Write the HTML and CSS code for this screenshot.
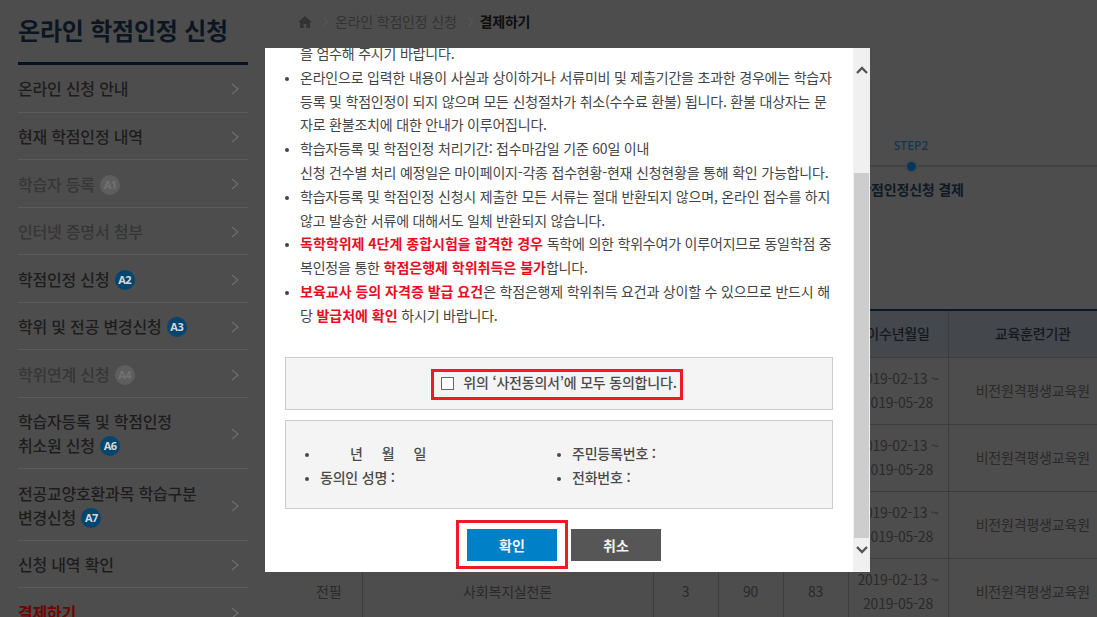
FILE: index.html
```html
<!DOCTYPE html>
<html lang="ko">
<head>
<meta charset="utf-8">
<title>온라인 학점인정 신청 - 결제하기</title>
<link rel="stylesheet" href="styles.css">
</head>
<body>
<div class="page">
  <aside class="sidebar">
    <h1 class="side-title">온라인 학점인정 신청</h1>
    <nav class="side-nav">
      <a class="side-item"><span>온라인 신청 안내</span><svg class="chev" viewBox="0 0 8 12"><path d="M1 1l6 5-6 5"/></svg></a>
      <a class="side-item"><span>현재 학점인정 내역</span><svg class="chev" viewBox="0 0 8 12"><path d="M1 1l6 5-6 5"/></svg></a>
      <a class="side-item off"><span>학습자 등록 <i class="badge">A1</i></span><svg class="chev" viewBox="0 0 8 12"><path d="M1 1l6 5-6 5"/></svg></a>
      <a class="side-item off"><span>인터넷 증명서 첨부</span><svg class="chev" viewBox="0 0 8 12"><path d="M1 1l6 5-6 5"/></svg></a>
      <a class="side-item"><span>학점인정 신청 <i class="badge">A2</i></span><svg class="chev" viewBox="0 0 8 12"><path d="M1 1l6 5-6 5"/></svg></a>
      <a class="side-item"><span>학위 및 전공 변경신청 <i class="badge">A3</i></span><svg class="chev" viewBox="0 0 8 12"><path d="M1 1l6 5-6 5"/></svg></a>
      <a class="side-item off"><span>학위연계 신청 <i class="badge">A4</i></span><svg class="chev" viewBox="0 0 8 12"><path d="M1 1l6 5-6 5"/></svg></a>
      <a class="side-item"><span>학습자등록 및 학점인정<br>취소원 신청 <i class="badge">A6</i></span><svg class="chev" viewBox="0 0 8 12"><path d="M1 1l6 5-6 5"/></svg></a>
      <a class="side-item"><span>전공교양호환과목 학습구분<br>변경신청 <i class="badge">A7</i></span><svg class="chev" viewBox="0 0 8 12"><path d="M1 1l6 5-6 5"/></svg></a>
      <a class="side-item"><span>신청 내역 확인</span><svg class="chev" viewBox="0 0 8 12"><path d="M1 1l6 5-6 5"/></svg></a>
      <a class="side-item now"><span>결제하기</span><svg class="chev" viewBox="0 0 8 12"><path d="M1 1l6 5-6 5"/></svg></a>
    </nav>
  </aside>

  <main class="main">
    <div class="crumbs">
      <svg class="home" viewBox="0 0 14 12"><path d="M7 0L0 6.2h2V12h3.6V8h2.8v4H12V6.2h2z"/></svg>
      <svg class="crumb-sep" viewBox="0 0 5 10"><path d="M.5.5L4.5 5 .5 9.5"/></svg>
      <span>온라인 학점인정 신청</span>
      <svg class="crumb-sep" viewBox="0 0 5 10"><path d="M.5.5L4.5 5 .5 9.5"/></svg>
      <strong>결제하기</strong>
    </div>

    <div class="steps">
      <div class="step">
        <div class="step-no"></div>
        <div class="step-track"></div>
      </div>
      <div class="step">
        <div class="step-no">STEP2</div>
        <div class="step-track"><i class="step-dot"></i></div>
        <div class="step-name">학점인정신청 결제</div>
      </div>
    </div>

    <table class="grid">
      <colgroup>
        <col class="c1"><col class="c2"><col class="c3"><col class="c3"><col class="c3"><col class="c4"><col class="c5">
      </colgroup>
      <thead>
        <tr><th>구분</th><th>과목명</th><th>학점</th><th>출석</th><th>성적</th><th>이수년월일</th><th>교육훈련기관</th></tr>
      </thead>
      <tbody>
        <tr><td>전필</td><td>사회복지개론</td><td>3</td><td>90</td><td>83</td><td>2019-02-13 ~<br>2019-05-28</td><td>비전원격평생교육원</td></tr>
        <tr><td>전필</td><td>사회복지법제론</td><td>3</td><td>90</td><td>83</td><td>2019-02-13 ~<br>2019-05-28</td><td>비전원격평생교육원</td></tr>
        <tr><td>전필</td><td>사회복지행정론</td><td>3</td><td>90</td><td>83</td><td>2019-02-13 ~<br>2019-05-28</td><td>비전원격평생교육원</td></tr>
        <tr><td>전필</td><td>사회복지실천론</td><td>3</td><td>90</td><td>83</td><td>2019-02-13 ~<br>2019-05-28</td><td>비전원격평생교육원</td></tr>
      </tbody>
    </table>
  </main>
</div>

<section class="modal">
  <div class="modal-body">
    <div class="modal-scroll">
      <p class="lead">을 엄수해 주시기 바랍니다.</p>
      <ul class="notes">
        <li>온라인으로 입력한 내용이 사실과 상이하거나 서류미비 및 제출기간을 초과한 경우에는 학습자등록 및 학점인정이 되지 않으며 모든 신청절차가 취소(수수료 환불) 됩니다. 환불 대상자는 문자로 환불조치에 대한 안내가 이루어집니다.</li>
        <li>학습자등록 및 학점인정 처리기간: 접수마감일 기준 60일 이내<br>신청 건수별 처리 예정일은 마이페이지-각종 접수현황-현재 신청현황을 통해 확인 가능합니다.</li>
        <li>학습자등록 및 학점인정 신청시 제출한 모든 서류는 절대 반환되지 않으며, 온라인 접수를 하지 않고 발송한 서류에 대해서도 일체 반환되지 않습니다.</li>
        <li><b>독학학위제 4단계 종합시험을 합격한 경우</b> 독학에 의한 학위수여가 이루어지므로 동일학점 중복인정을 통한 <b>학점은행제 학위취득은 불가</b>합니다.</li>
        <li><b>보육교사 등의 자격증 발급 요건</b>은 학점은행제 학위취득 요건과 상이할 수 있으므로 반드시 해당 <b>발급처에 확인</b> 하시기 바랍니다.</li>
      </ul>
      <div class="agree-box">
        <label class="agree"><i class="check"></i><span>위의 ‘사전동의서’에 모두 동의합니다.</span></label>
      </div>
      <ul class="sign-box">
        <li><span class="ymd"><span>년</span><span>월</span><span>일</span></span></li>
        <li>주민등록번호 :</li>
        <li>동의인 성명 :</li>
        <li>전화번호 :</li>
      </ul>
      <div class="actions">
        <button class="btn ok" type="button">확인</button>
        <button class="btn cancel" type="button">취소</button>
      </div>
    </div>
    <div class="mark mark-agree"></div>
    <div class="mark mark-ok"></div>
  </div>
  <div class="scrollbar">
    <svg class="arrow" viewBox="0 0 12 10"><path d="M1 8l5-5 5 5"/></svg>
    <div class="sb-gap-top"></div>
    <div class="sb-thumb"></div>
    <svg class="arrow" viewBox="0 0 12 10"><path d="M1 2l5 5 5-5"/></svg>
  </div>
</section>
</body>
</html>
```

FILE: styles.css
```css
* { box-sizing: border-box; }
html, body { height: 100%; margin: 0; }
body {
  overflow: hidden;
  background: #4d4d4d;
  color: #2a2a2a;
  font-family: "Noto Sans CJK KR", "Noto Sans", sans-serif;
  font-size: 14px;
  line-height: 23.8px;
  letter-spacing: -.2px;
}
.page { display: flex; height: 617px; overflow: hidden; }

/* sidebar */
.sidebar { flex: none; width: 230px; margin-left: 18px; }
.side-title {
  margin: 0;
  height: 65px;
  padding-top: 12px;
  border-bottom: 3px solid #06121f;
  color: #0b1622;
  font-size: 24px;
  line-height: 36px;
  font-weight: 700;
  white-space: nowrap;
}
.side-item {
  display: flex;
  align-items: center;
  justify-content: space-between;
  padding: 12.4px 9px 10.4px 0;
  border-bottom: 1px solid #5c5c5c;
  color: #1d1d1d;
  font-size: 16px;
  font-weight: 500;
}
.side-item.off { color: #363636; }
.side-item.now { color: #6d0505; font-weight: 700; }
.badge {
  display: inline-block;
  width: 20px;
  height: 20px;
  margin: 2px 0 0 1px;
  border-radius: 50%;
  background: #02456f;
  color: #d8d8d8;
  font: 700 11px/20px "Noto Sans", sans-serif;
  letter-spacing: -.5px;
  text-align: center;
  vertical-align: top;
}
.off .badge { background: #5e5e5e; color: #727272; }
.chev { flex: none; width: 8px; height: 12px; fill: none; stroke: #6e6e6e; stroke-width: 1.2; }

/* main */
.main { flex: none; width: 821px; margin-left: 48px; }
.crumbs {
  display: flex;
  align-items: center;
  height: 44px;
  padding-left: 2px;
  color: #333;
}
.crumbs strong { color: #0e0e0e; font-weight: 700; }
.home { width: 14px; height: 12px; fill: #333; }
.crumb-sep { width: 5px; height: 10px; margin: 0 7px 0 11px; fill: none; stroke: #5d5d5d; }
.steps { display: grid; grid-template-columns: 410px 410px; padding-top: 92px; height: 265px; text-align: center; }
.step-no { height: 20px; color: #103850; font: 500 12px/20px "Noto Sans", sans-serif; letter-spacing: .1px; }
.step-track {
  display: flex;
  align-items: center;
  justify-content: center;
  height: 20px;
  background: linear-gradient(#424242, #424242) center / 100% 2px no-repeat;
}
.step-dot { width: 9px; height: 9px; border-radius: 50%; background: #02385c; box-shadow: 0 0 0 2px #494949; }
.step-name { color: #0f1a26; font-weight: 700; line-height: 26px; }

.grid { width: 821px; table-layout: fixed; border-collapse: collapse; border-top: 2px solid #0a1827; }
.c1 { width: 66px; }
.c2 { width: 291px; }
.c3 { width: 65px; }
.c4 { width: 100px; }
.c5 { width: 169px; }
.grid th {
  height: 47px;
  padding: 0;
  background: #44474c;
  border-bottom: 1px solid #3d3d3d;
  border-left: 1px solid #3d3d3d;
  color: #15191f;
  font-weight: 500;
}
.grid td {
  height: 67px;
  padding: 0;
  border-bottom: 1px solid #3d3d3d;
  border-left: 1px solid #3d3d3d;
  text-align: center;
  color: #2a2a2a;
}
.grid th:first-child, .grid td:first-child { border-left: 0; }

/* modal */
.modal {
  position: absolute;
  left: 265px;
  top: 48px;
  display: flex;
  width: 605px;
  height: 524px;
  background: #fff;
  overflow: hidden;
}
.modal-body { position: relative; flex: 1; overflow: hidden; padding: 0 20px; color: #444; }
.modal-scroll { margin-top: -6px; }
.lead { margin: 0; padding-left: 15px; }
.notes { margin: 0; padding: 0 0 0 15px; list-style: disc; }
.notes li::marker, .sign-box li::marker { font-size: 11px; }
.notes b { color: #ed0b1f; font-weight: 700; letter-spacing: 0; }
.agree-box {
  display: flex;
  justify-content: center;
  align-items: center;
  height: 53px;
  margin-top: 29px;
  border: 1px solid #ccc;
  background: #f4f4f4;
}
.agree { display: flex; align-items: center; font-weight: 500; color: #4a4a4a; }
.check { width: 13px; height: 13px; margin-right: 9px; border: 1px solid #666; background: #fff; }
.sign-box {
  display: grid;
  grid-template-columns: 252px 1fr;
  grid-auto-rows: 24px;
  height: 89px;
  margin: 10px 0 0;
  padding: 21px 19px 0 34px;
  border: 1px solid #ccc;
  background: #f4f4f4;
  font-weight: 500;
  color: #4a4a4a;
  align-content: start;
}
.ymd { display: flex; gap: 19px; padding-left: 30px; }
.actions { display: flex; justify-content: center; gap: 14px; margin-top: 20px; padding-left: 10px; }
.btn {
  width: 90px;
  height: 32px;
  padding: 0;
  border: 0;
  color: #f2f2f2;
  font: 700 14px/32px "Noto Sans CJK KR", sans-serif;
}
.ok { background: #0080c6; }
.cancel { background: #565656; }
.mark { position: absolute; border: 3px solid #ed1c24; }
.mark-agree { left: 166px; top: 321px; width: 252px; height: 31px; }
.mark-ok { left: 191px; top: 472px; width: 112px; height: 49px; }
.scrollbar {
  display: flex;
  flex: none;
  flex-direction: column;
  align-items: center;
  width: 17px;
  background: #f0f0f0;
}
.arrow { flex: none; width: 12px; height: 10px; margin: 17px 0 0; fill: none; stroke: #555; stroke-width: 2.4; }
.sb-gap-top { height: 98px; }
.sb-thumb { flex: none; width: 15px; height: 365px; background: #cdcdcd; }
.sb-thumb + .arrow { margin: 7px 0 0; }
```
